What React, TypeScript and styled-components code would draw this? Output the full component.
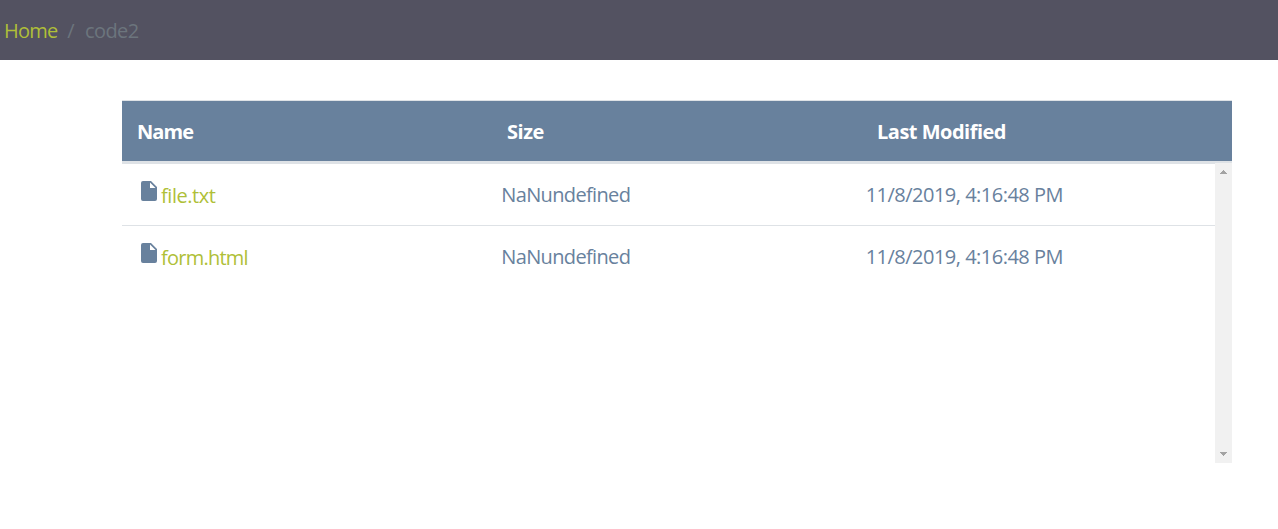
import React from 'react';
import styled, { createGlobalStyle } from 'styled-components';

const GlobalStyle = createGlobalStyle`
  * { box-sizing: border-box; }
  body {
    margin: 0;
    background: #fff;
    color: #68819d;
    font: 400 20px/30px "Segoe UI", "Open Sans", "Noto Sans", sans-serif;
    overflow: hidden;
  }
`;

const Breadcrumb = styled.nav`
  display: flex;
  align-items: center;
  height: 60px;
  padding: 2px 4px 0;
  background: #535261;
`;

const Label = styled.span<{ $spacing?: number }>`
  letter-spacing: ${({ $spacing = 0 }) => $spacing}px;
  white-space: nowrap;
`;

const Link = styled.a<{ $spacing?: number }>`
  color: #afbf38;
  letter-spacing: ${({ $spacing = 0 }) => $spacing}px;
  text-decoration: none;
`;

const Current = styled.span`
  display: flex;
  color: #6c757d;
  letter-spacing: -0.6px;
  &::before {
    content: "/";
    padding: 0 11px 0 10px;
  }
`;

const Table = styled.section`
  width: 1110px;
  margin: 40px 0 0 122px;
`;

const Header = styled.div`
  display: grid;
  grid-template-columns: repeat(3, 1fr);
  height: 63px;
  border-top: 1px solid #dee2e6;
  border-bottom: 2px solid #dee2e6;
  background: #68819d;
  color: #fff;
  font-weight: 700;
`;

const Cell = styled.div`
  display: flex;
  align-items: center;
  padding: 2px 15px 0;
`;

const Body = styled.div`
  display: flex;
  height: 300px;
`;

const Rows = styled.div`
  flex: 1;
`;

const Row = styled.div`
  display: grid;
  grid-template-columns: repeat(3, 1fr);
  height: 62px;
  border-top: 1px solid #dee2e6;
`;

const DataCell = styled(Cell)`
  padding-top: 0;
`;

const NameCell = styled(Cell)`
  padding-top: 2px;
`;

const Icon = styled.svg`
  flex: none;
  width: 24px;
  height: 24px;
  margin-top: -10px;
`;

const Scrollbar = styled.div`
  display: flex;
  flex-direction: column;
  justify-content: space-between;
  align-items: center;
  width: 17px;
  padding: 7px 0;
  background: #f1f1f1;
`;

const Arrow = styled.svg`
  width: 7px;
  height: 4px;
  fill: #a3a3a3;
`;

const files = [
  { name: 'file.txt', spacing: -0.45 },
  { name: 'form.html', spacing: -0.75 },
];

export default function App() {
  return (
    <>
      <GlobalStyle />
      <Breadcrumb>
        <Link href="#" $spacing={-0.8}>Home</Link>
        <Current>code2</Current>
      </Breadcrumb>
      <Table>
        <Header>
          <Cell><Label $spacing={-0.95}>Name</Label></Cell>
          <Cell><Label $spacing={-0.45}>Size</Label></Cell>
          <Cell><Label $spacing={-0.5}>Last Modified</Label></Cell>
        </Header>
        <Body>
          <Rows>
            {files.map((file) => (
              <Row key={file.name}>
                <NameCell>
                  <Icon viewBox="0 0 24 24">
                    <path
                      fill="#68819d"
                      fillRule="evenodd"
                      d="M6 2h8l6 6v12a2 2 0 0 1-2 2H6a2 2 0 0 1-2-2V4a2 2 0 0 1 2-2zm7 1.5V9h5.5L13 3.5z"
                    />
                  </Icon>
                  <Link href="#" $spacing={file.spacing}>{file.name}</Link>
                </NameCell>
                <DataCell><Label $spacing={-0.65}>NaNundefined</Label></DataCell>
                <DataCell><Label $spacing={-0.51}>11/8/2019, 4:16:48 PM</Label></DataCell>
              </Row>
            ))}
          </Rows>
          <Scrollbar>
            <Arrow viewBox="0 0 7 4" shapeRendering="crispEdges"><path d="M3 0h1v1h1v1h1v1h1v1H0V3h1V2h1V1h1z" /></Arrow>
            <Arrow viewBox="0 0 7 4" shapeRendering="crispEdges"><path d="M0 0h7v1H6v1H5v1H4v1H3V3H2V2H1V1H0z" /></Arrow>
          </Scrollbar>
        </Body>
      </Table>
    </>
  );
}
